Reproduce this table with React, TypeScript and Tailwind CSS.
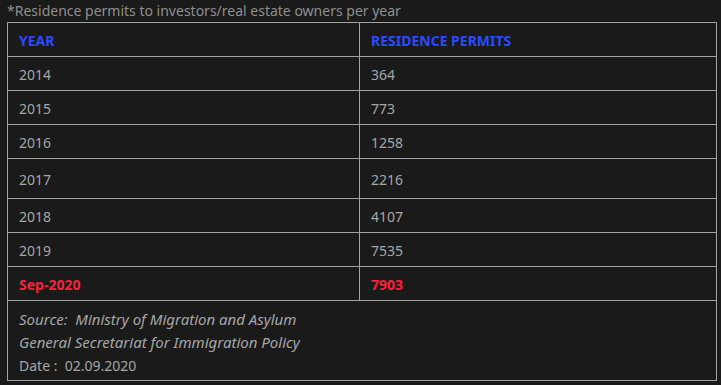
const rows = [
  { year: "2014", permits: "364", h: "h-[34px]" },
  { year: "2015", permits: "773", h: "h-[34px]" },
  { year: "2016", permits: "1258", h: "h-[34px]" },
  { year: "2017", permits: "2216", h: "h-[40px]" },
  { year: "2018", permits: "4107", h: "h-[34px]" },
  { year: "2019", permits: "7535", h: "h-[34px]" },
];

function App() {
  return (
    <div
      className="w-[721px] h-[385px] bg-[#1a1a1a] text-[14px] text-[#a6a6a6] overflow-hidden"
      style={{ fontFamily: '"Noto Sans", "Open Sans", sans-serif' }}
    >
      <div className="h-[22px] pl-[7px] leading-[22px] text-[#8f8f8f]">
        *Residence permits to investors/real estate owners per year
      </div>

      <div className="ml-[7px] w-[710px] border border-[#a3a3a3]">
        <div className="flex h-[34px] border-b border-[#a3a3a3] font-bold text-[#2a4bff]">
          <div className="w-[352px] border-r border-[#a3a3a3] pl-[11px] pt-[2px] flex items-center">
            YEAR
          </div>
          <div className="flex-1 pl-[11px] pt-[2px] flex items-center">
            RESIDENCE PERMITS
          </div>
        </div>

        {rows.map((row) => (
          <div
            key={row.year}
            className={`flex ${row.h} border-b border-[#a3a3a3]`}
          >
            <div className="w-[352px] border-r border-[#a3a3a3] pl-[11px] pt-[2px] flex items-center">
              {row.year}
            </div>
            <div className="flex-1 pl-[11px] pt-[2px] flex items-center">
              {row.permits}
            </div>
          </div>
        ))}

        <div className="flex h-[34px] border-b border-[#a3a3a3] font-bold text-[#ff1f3d]">
          <div className="w-[352px] border-r border-[#a3a3a3] pl-[11px] pt-[2px] flex items-center">
            Sep-2020
          </div>
          <div className="flex-1 pl-[11px] pt-[2px] flex items-center">
            7903
          </div>
        </div>

        <div className="h-[79px] pl-[11px] pt-[7px] leading-[23px]">
          <div className="italic text-[15px]">Source:&nbsp; Ministry of Migration and Asylum</div>
          <div className="italic text-[15px]">General Secretariat for Immigration Policy</div>
          <div>Date :&nbsp; 02.09.2020</div>
        </div>
      </div>
    </div>
  );
}

export default App;
